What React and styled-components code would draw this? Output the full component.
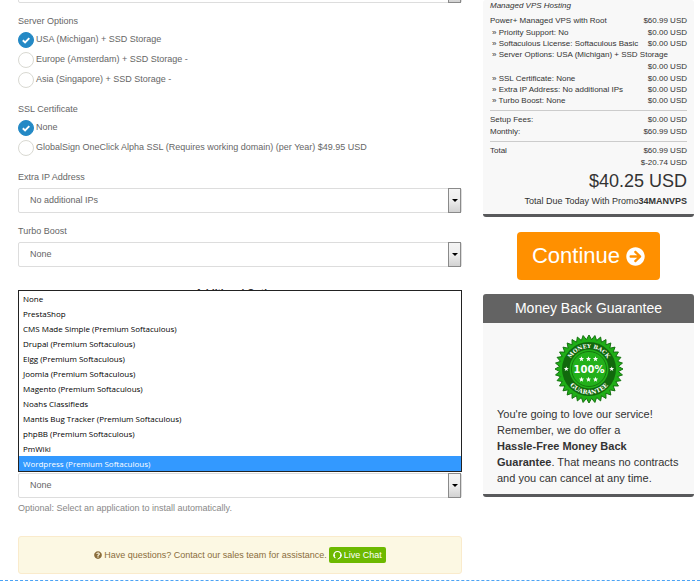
import React from "react";
import { useState } from "react";
import styled, { createGlobalStyle } from "styled-components";
import { FaArrowCircleRight, FaQuestionCircle } from "react-icons/fa";

const GlobalStyle = createGlobalStyle`
  * {
    box-sizing: border-box;
  }
  body {
    margin: 0;
    background: #fff;
    color: #666;
    font-family: "Liberation Sans", Arial, sans-serif;
    font-size: 9px;
    line-height: 15px;
  }
`;

const serverOptions = [
  "USA (Michigan) + SSD Storage",
  "Europe (Amsterdam) + SSD Storage -",
  "Asia (Singapore) + SSD Storage -",
];

const sslOptions = [
  "None",
  "GlobalSign OneClick Alpha SSL (Requires working domain) (per Year) $49.95 USD",
];

const applications = [
  "None",
  "PrestaShop",
  "CMS Made Simple (Premium Softaculous)",
  "Drupal (Premium Softaculous)",
  "Elgg (Premium Softaculous)",
  "Joomla (Premium Softaculous)",
  "Magento (Premium Softaculous)",
  "Noahs Classifieds",
  "Mantis Bug Tracker (Premium Softaculous)",
  "phpBB (Premium Softaculous)",
  "PmWiki",
  "Wordpress (Premium Softaculous)",
];

const summaryItems = [
  { label: "Priority Support: No", price: "$0.00 USD" },
  { label: "Softaculous License: Softaculous Basic", price: "$0.00 USD" },
  { label: "Server Options: USA (Michigan) + SSD Storage", price: "$0.00 USD", wrap: true },
  { label: "SSL Certificate: None", price: "$0.00 USD" },
  { label: "Extra IP Address: No additional IPs", price: "$0.00 USD" },
  { label: "Turbo Boost: None", price: "$0.00 USD" },
];

const Page = styled.div`
  display: grid;
  grid-template-columns: minmax(0, 1fr) 211px;
  column-gap: 21px;
  padding: 0 6px 6px 18px;
  overflow: hidden;
  border-bottom: 1px dashed #4ba3f5;
`;

const Main = styled.main`
  display: flex;
  flex-direction: column;
`;

/* the previous field is scrolled out, only its lower edge shows */
const ScrolledField = styled.div`
  margin-top: -22px;
  margin-bottom: 11px;
`;

const RadioGroup = styled.fieldset`
  margin: 0 0 13px;
  padding: 0;
  border: 0;
  min-width: 0;
`;

const Legend = styled.legend`
  padding: 0;
`;

const RadioLabel = styled.label`
  display: flex;
  align-items: center;
  gap: 2px;
  height: 20px;
`;

const Radio = styled.input`
  appearance: none;
  flex: none;
  width: 16px;
  height: 16px;
  margin: 1px 0 0;
  border: 1px solid #d9d9d2;
  border-radius: 50%;
  background: #fff;

  &:checked {
    border-color: #2489c5;
    background: #2489c5
      url("data:image/svg+xml,%3Csvg xmlns='http://www.w3.org/2000/svg' viewBox='0 0 14 14'%3E%3Cpath d='M3.8 7.2l2.3 2.2 4.2-4.2' fill='none' stroke='white' stroke-width='1.9'/%3E%3C/svg%3E")
      center / 14px no-repeat;
  }
`;

const Field = styled.div`
  display: flex;
  flex-direction: column;
  gap: 3px;
  margin-bottom: 11px;
`;

const SelectBox = styled.div`
  position: relative;
  display: flex;
  height: 25px;
  border: 1px solid #ddd;
  border-radius: 2px;
  background: #fff;
`;

const NativeSelect = styled.select`
  appearance: none;
  flex: 1;
  min-width: 0;
  padding: 0 11px;
  border: 0;
  background: transparent;
  color: #666;
  font: inherit;
`;

const ArrowButton = styled.span`
  display: flex;
  align-items: center;
  justify-content: center;
  width: 13px;
  margin: -1px 0;
  border: 1px solid #8a8a8a;
  background: linear-gradient(#f4f4f4, #ededed 50%, #d2d2d2);
  pointer-events: none;

  &::before {
    content: "";
    border: 3px solid transparent;
    border-top-color: #000;
    border-bottom: 0;
  }
`;

const SectionTitle = styled.h2`
  margin: 8px 0 0;
  color: #333;
  font-size: 10px;
  line-height: 15px;
  text-align: center;
`;

const AppField = styled.div`
  margin-top: 172px;
`;

const OptionList = styled.ul`
  position: absolute;
  z-index: 1;
  left: -1px;
  right: -1px;
  bottom: calc(100% + 2px);
  margin: 0;
  padding: 0;
  list-style: none;
  border: 1px solid #222;
  background: #fff;
  font-family: "Open Sans", "Noto Sans", sans-serif;
  font-size: 8px;
`;

const Option = styled.li`
  height: 15px;
  padding: 0 4px;
  color: ${(props) => (props.$active ? "#fff" : "#000")};
  background: ${(props) => (props.$active ? "#3399ff" : "transparent")};
`;

const Hint = styled.p`
  margin: 3px 0 0;
  color: #888;
`;

const Alert = styled.div`
  display: flex;
  align-items: center;
  justify-content: center;
  gap: 2px;
  height: 38px;
  margin-top: 20px;
  border: 1px solid #faebcc;
  border-radius: 3px;
  background: #fcf8e3;
  color: #8a6d3b;
`;

const ChatButton = styled.button`
  display: flex;
  align-items: center;
  gap: 2px;
  height: 16px;
  padding: 0 4px;
  border: 0;
  border-radius: 2px;
  background: #6db900;
  color: #fff;
  font: inherit;
`;

const Sidebar = styled.aside`
  display: flex;
  flex-direction: column;
  color: #333;
`;

const Card = styled.section`
  border-bottom: 3px solid #58595b;
  border-radius: 3px;
  background: #f8f8f8;
`;

const Summary = styled(Card)`
  padding: 0 7px 5px;
  font-size: 8px;
  line-height: 11px;
`;

const GroupName = styled.p`
  margin: 0 0 4px;
  font-style: italic;
`;

const SummaryRow = styled.div`
  display: flex;
  flex-wrap: wrap;
  justify-content: space-between;
  padding-left: ${(props) => (props.$sub ? "2px" : "0")};
  line-height: ${(props) => (props.$tall ? "12px" : "11px")};
`;

const Price = styled.span`
  margin-left: auto;
`;

const Divider = styled.hr`
  margin: 4px 0 3px;
  border: 0;
  border-top: 1px solid #ccc;
`;

const DueAmount = styled.p`
  margin: 1px 0 0;
  font-size: 18px;
  line-height: 24px;
  text-align: right;
`;

const DueLabel = styled.p`
  margin: 0;
  font-size: 9px;
  line-height: 16px;
  text-align: right;
`;

const ContinueButton = styled.button`
  display: flex;
  align-items: center;
  align-self: center;
  gap: 6px;
  height: 48px;
  margin: 15px 0 14px;
  padding: 0 15px;
  border: 0;
  border-radius: 4px;
  background: #ff9000;
  color: #fff;
  font-family: inherit;
  font-size: 22px;
`;

const CardTitle = styled.h3`
  margin: 0;
  border-radius: 3px 3px 0 0;
  background: #636363;
  color: #fff;
  font-size: 14px;
  font-weight: normal;
  line-height: 29px;
  text-align: center;
`;

const GuaranteeBody = styled.div`
  padding: 11px 14px 8px;
  font-size: 11px;
  line-height: 16px;

  svg {
    display: block;
    margin: 0 auto 2px;
  }

  p {
    margin: 0;
  }
`;

const ChatIcon = () => (
  <svg width="9" height="10" viewBox="0 0 9 10" fill="none" stroke="#fff" aria-hidden="true">
    <path d="M2.4 8A3.6 3.6 0 1 1 6.6 8" strokeWidth="1.1" />
    <path d="M1.2 4.4v2.2M7.8 4.4v2.2" strokeWidth="1.6" />
    <path d="M7.2 7.6L4.6 9.2" strokeWidth="1" />
  </svg>
);

const star = (x, y, r) => {
  const points = [];
  for (let i = 0; i < 10; i++) {
    const radius = i % 2 ? r * 0.42 : r;
    const angle = (i * Math.PI) / 5 - Math.PI / 2;
    points.push(`${x + radius * Math.cos(angle)},${y + radius * Math.sin(angle)}`);
  }
  return points.join(" ");
};

const burst = () => {
  const points = [];
  const teeth = 36;
  for (let i = 0; i < teeth * 2; i++) {
    const radius = i % 2 ? 29.5 : 34;
    const angle = (i * Math.PI) / teeth - Math.PI / 2;
    points.push(`${35 + radius * Math.cos(angle)},${35 + radius * Math.sin(angle)}`);
  }
  return points.join(" ");
};

const stars = [
  [27.5, 25, 2.8],
  [34.5, 25, 2.8],
  [41.5, 25, 2.8],
  [27.5, 45.5, 2.8],
  [34.5, 45.5, 2.8],
  [41.5, 45.5, 2.8],
  [12.3, 35, 2.6],
  [57.7, 35, 2.6],
];

const GuaranteeSeal = () => (
  <svg width="70" height="70" viewBox="0 0 70 70" role="img" aria-label="100% money back guarantee">
    <defs>
      <path id="seal-top" d="M14 35a21 21 0 0 1 42 0" />
      <path id="seal-bottom" d="M9.7 35a25.3 25.3 0 0 0 50.6 0" />
    </defs>
    <polygon points={burst()} fill="#1fae17" stroke="#14720f" strokeWidth="1" />
    <circle cx="35" cy="35" r="27" fill="#11690d" />
    <circle cx="35" cy="35" r="19.5" fill="#22b01a" />
    <circle cx="35" cy="35" r="17.5" fill="none" stroke="#11690d" strokeWidth="0.8" />
    {stars.map(([x, y, r]) => (
      <polygon key={`${x}-${y}`} points={star(x, y, r)} fill="#fff" />
    ))}
    <g fill="#fff" fontFamily="'DejaVu Serif', serif" fontWeight="bold" textAnchor="middle">
      <text x="35" y="38.5" fontSize="10" fontFamily="'DejaVu Sans', sans-serif">100%</text>
      <text fontSize="5.5">
        <textPath href="#seal-top" startOffset="50%">MONEY BACK</textPath>
      </text>
      <text fontSize="6">
        <textPath href="#seal-bottom" startOffset="50%">GUARANTEE</textPath>
      </text>
    </g>
  </svg>
);

const RadioField = ({ title, name, options }) => {
  const [selected, setSelected] = useState(options[0]);

  return (
    <RadioGroup>
      <Legend>{title}</Legend>
      {options.map((option) => (
        <RadioLabel key={option}>
          <Radio
            type="radio"
            name={name}
            checked={selected === option}
            onChange={() => setSelected(option)}
          />
          {option}
        </RadioLabel>
      ))}
    </RadioGroup>
  );
};

const Select = ({ id, label, options, children }) => (
  <SelectBox>
    <NativeSelect id={id} aria-label={label}>
      {options.map((option) => (
        <option key={option}>{option}</option>
      ))}
    </NativeSelect>
    <ArrowButton />
    {children}
  </SelectBox>
);

const App = () => {
  const [active, setActive] = useState("Wordpress (Premium Softaculous)");

  return (
    <>
      <GlobalStyle />
      <Page>
        <Main>
          <ScrolledField>
            <Select label="License" options={[""]} />
          </ScrolledField>
          <RadioField title="Server Options" name="server" options={serverOptions} />
          <RadioField title="SSL Certificate" name="ssl" options={sslOptions} />
          <Field>
            <label htmlFor="extra-ip">Extra IP Address</label>
            <Select id="extra-ip" options={["No additional IPs"]} />
          </Field>
          <Field>
            <label htmlFor="turbo">Turbo Boost</label>
            <Select id="turbo" options={["None"]} />
          </Field>
          <SectionTitle>Additional Options</SectionTitle>
          <AppField>
            <Select label="Application" options={["None"]}>
              <OptionList role="listbox" aria-label="Application">
                {applications.map((name) => (
                  <Option
                    key={name}
                    role="option"
                    aria-selected={active === name}
                    $active={active === name}
                    onMouseEnter={() => setActive(name)}
                  >
                    {name}
                  </Option>
                ))}
              </OptionList>
            </Select>
            <Hint>Optional: Select an application to install automatically.</Hint>
          </AppField>
          <Alert>
            <FaQuestionCircle size={8} />
            <span>Have questions? Contact our sales team for assistance.</span>
            <ChatButton type="button">
              <ChatIcon />
              Live Chat
            </ChatButton>
          </Alert>
        </Main>
        <Sidebar>
          <Summary>
            <GroupName>Managed VPS Hosting</GroupName>
            <SummaryRow $tall>
              <span>Power+ Managed VPS with Root</span>
              <Price>$60.99 USD</Price>
            </SummaryRow>
            {summaryItems.map((item) => (
              <SummaryRow key={item.label} $sub $tall={item.wrap}>
                <span>» {item.label}</span>
                <Price>{item.price}</Price>
              </SummaryRow>
            ))}
            <Divider />
            <SummaryRow $tall>
              <span>Setup Fees:</span>
              <Price>$0.00 USD</Price>
            </SummaryRow>
            <SummaryRow>
              <span>Monthly:</span>
              <Price>$60.99 USD</Price>
            </SummaryRow>
            <Divider />
            <SummaryRow $tall>
              <span>Total</span>
              <Price>$60.99 USD</Price>
            </SummaryRow>
            <SummaryRow>
              <Price>$-20.74 USD</Price>
            </SummaryRow>
            <DueAmount>$40.25 USD</DueAmount>
            <DueLabel>
              Total Due Today With Promo<strong>34MANVPS</strong>
            </DueLabel>
          </Summary>
          <ContinueButton type="button">
            Continue
            <FaArrowCircleRight size={19} />
          </ContinueButton>
          <Card>
            <CardTitle>Money Back Guarantee</CardTitle>
            <GuaranteeBody>
              <GuaranteeSeal />
              <p>You're going to love our service!</p>
              <p>Remember, we do offer a</p>
              <p>
                <strong>Hassle-Free Money Back Guarantee</strong>. That means no contracts
                and you can cancel at any time.
              </p>
            </GuaranteeBody>
          </Card>
        </Sidebar>
      </Page>
    </>
  );
};

export default App;
